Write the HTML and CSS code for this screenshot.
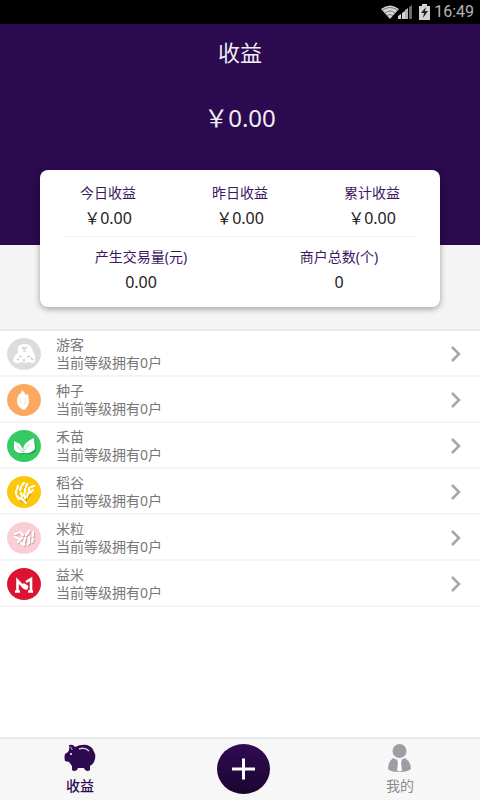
FILE: index.html
```html
<!DOCTYPE html>
<html lang="zh-CN">
<head>
<meta charset="utf-8">
<meta name="viewport" content="width=device-width, initial-scale=1">
<title>收益</title>
<link rel="stylesheet" href="styles.css">
</head>
<body>
<div class="status">
  <svg width="34" height="16" viewBox="0 0 34 16" aria-hidden="true">
    <path d="M0 5Q9-2 18 5L9 15Z" fill="#d4d4d4"/>
    <path d="M1 6.500Q9 0.500 17 6.500M4 9Q9 5 14 9M6 11.500Q9 9.500 12 11.500" fill="none" stroke="#777" stroke-width="1"/>
    <path d="M17 15v-3l3-2v5zM21 15V9l3-2v8z" fill="#d4d4d4"/>
    <path d="M24 15V6l3-2v11z" fill="#b5b5b5"/>
    <path d="M28 15V3l3-2v14z" fill="#6a6a6a"/>
  </svg>
  <svg width="11" height="16" viewBox="0 0 11 16" aria-hidden="true">
    <path d="M3 0h5v2h3v14H0V2h3z" fill="#d4d4d4"/>
    <path d="M7 3L2 9h3l-1 5 5-7H6z" fill="#222"/>
  </svg>
  <span class="clock">16:49</span>
</div>

<main class="page">
  <header class="hero">
    <h1 class="title">收益</h1>
    <p class="total">&#65509;0.00</p>
  </header>

  <section class="summary">
    <div class="card">
      <dl class="stats stats-three">
        <div><dt>今日收益</dt><dd>&#65509;0.00</dd></div>
        <div><dt>昨日收益</dt><dd>&#65509;0.00</dd></div>
        <div><dt>累计收益</dt><dd>&#65509;0.00</dd></div>
      </dl>
      <hr class="rule">
      <dl class="stats stats-two">
        <div><dt>产生交易量(元)</dt><dd>0.00</dd></div>
        <div><dt>商户总数(个)</dt><dd>0</dd></div>
      </dl>
    </div>
  </section>

  <ul class="levels">
    <li><a class="level" href="#visitor">
      <svg class="badge" viewBox="0 0 34 32" aria-hidden="true">
        <ellipse cx="17" cy="16" rx="17" ry="16" fill="#dcdcdc"/>
        <path d="M11 15Q9 7 16 6Q25 5 26 14Q29 17 28 24Q25 26 22 24L18 25 14 24Q9 27 6 23Q7 17 11 15Z" fill="#fff"/>
        <path d="M15 9l2 2 3-2M16 13h3M12 18l3 1M20 19l3-1M17 21v3M24 20l2 2M10 21l2 1" fill="none" stroke="#c2c2c2" stroke-width="1.200"/>
      </svg>
      <span class="info"><span>游客</span><span>当前等级拥有0户</span></span>
      <svg class="chevron" viewBox="0 0 12 16" aria-hidden="true"><path d="M2 1l7 7-7 7"/></svg>
    </a></li>
    <li><a class="level" href="#seed">
      <svg class="badge" viewBox="0 0 34 32" aria-hidden="true">
        <ellipse cx="17" cy="16" rx="17" ry="16" fill="#fda85f"/>
        <path d="M15 6L18 9V11L21 10L22 17Q22 22 17 26Q11 24 10 18Q10 11 14 9Z" fill="#fff"/>
        <path d="M14 14v6M18 14v7" stroke="#fee3cc" fill="none"/>
      </svg>
      <span class="info"><span>种子</span><span>当前等级拥有0户</span></span>
      <svg class="chevron" viewBox="0 0 12 16" aria-hidden="true"><path d="M2 1l7 7-7 7"/></svg>
    </a></li>
    <li><a class="level" href="#sprout">
      <svg class="badge" viewBox="0 0 34 32" aria-hidden="true">
        <ellipse cx="17" cy="16" rx="17" ry="16" fill="#34cb63"/>
        <path d="M8 12L14 15 17 20Q18 13 28 9L29 21Q25 25 18 24Q10 25 8 20Z" fill="#239f49"/>
        <path d="M7 11L13 14 16 19Q17 12 27 8L28 19Q24 24 17 23Q9 24 7 19Z" fill="#fff"/>
        <path d="M16 22L22 15M15 22L10 16M16 18v5" stroke="#9ce6b3" fill="none"/>
      </svg>
      <span class="info"><span>禾苗</span><span>当前等级拥有0户</span></span>
      <svg class="chevron" viewBox="0 0 12 16" aria-hidden="true"><path d="M2 1l7 7-7 7"/></svg>
    </a></li>
    <li><a class="level" href="#rice">
      <svg class="badge" viewBox="0 0 34 32" aria-hidden="true">
        <ellipse cx="17" cy="16" rx="17" ry="16" fill="#fdc70c"/>
        <path d="M15 23L20 28M11 21Q13 25 17 26M20 19L19 26M26 14L21 22" fill="none" stroke="#c79a08" stroke-width="1.500"/>
        <g fill="none" stroke="#fff" stroke-width="2.200" stroke-linecap="round">
          <path d="M11 10l-1 3M9 15v3M10 20l2 3M13 22l3 2M17 7l-2 2M14 11l-1 3M14 17l1 3M20 8l-1 3M18 13v3M17 18l1 4M27 10l-3 1M22 12v3M26 14l-3 3M21 17l-1 4M17 25l2 2"/>
        </g>
      </svg>
      <span class="info"><span>稻谷</span><span>当前等级拥有0户</span></span>
      <svg class="chevron" viewBox="0 0 12 16" aria-hidden="true"><path d="M2 1l7 7-7 7"/></svg>
    </a></li>
    <li><a class="level" href="#grain">
      <svg class="badge" viewBox="0 0 34 32" aria-hidden="true">
        <ellipse cx="17" cy="16" rx="17" ry="16" fill="#fbcdd6"/>
        <g fill="none" stroke-linecap="round" stroke-width="2.200">
          <path d="M9 13l3-1M14 11l3 3M20 14l3-4M27 11v4M9 16l4 2M12 21l4-4M19 17l-1 5M23 16v5M27 18l-1 3M15 22l3 2M22 23l1-1" stroke="#cba6ae"/>
          <path d="M8 12l3-1M13 10l3 3M19 13l3-4M26 10v4M8 15l4 2M11 20l4-4M18 16l-1 5M22 15v5M26 17l-1 3M14 21l3 2M21 22l1-1" stroke="#fff"/>
        </g>
      </svg>
      <span class="info"><span>米粒</span><span>当前等级拥有0户</span></span>
      <svg class="chevron" viewBox="0 0 12 16" aria-hidden="true"><path d="M2 1l7 7-7 7"/></svg>
    </a></li>
    <li><a class="level" href="#yimi">
      <svg class="badge" viewBox="0 0 34 32" aria-hidden="true">
        <ellipse cx="17" cy="16" rx="17" ry="16" fill="#dc1432"/>
        <path d="M10.500 23V12.500L17 19.500Q20 22 20 18.500L16 16M19 14L24 11V23M8 23.500h5M21 23.500h5" fill="none" stroke="#fff" stroke-width="2.600"/>
      </svg>
      <span class="info"><span>益米</span><span>当前等级拥有0户</span></span>
      <svg class="chevron" viewBox="0 0 12 16" aria-hidden="true"><path d="M2 1l7 7-7 7"/></svg>
    </a></li>
  </ul>
</main>

<nav class="tabs">
  <a class="tab tab-active" href="#income">
    <svg width="34" height="28" viewBox="0 0 34 28" aria-hidden="true">
      <path d="M6 1Q10 0 12 3Q18 0 24 1Q30 3 31 8Q33 10 32 15Q31 20 27 22V26Q25 28 22 26L21 24H15L14 26Q11 28 9 26V22L6 18L2 17Q1 13 2 10L5 8Q7 6 6 1Z" fill="#2c0b50"/>
      <path d="M16 5Q22 3 26 7" fill="none" stroke="#d8cde4" stroke-width="1.500"/>
      <path d="M7 3Q9 3 9 6" fill="none" stroke="#b5a5c8"/>
      <circle cx="8" cy="10" r="1" fill="#fff"/>
    </svg>
    <span>收益</span>
  </a>
  <button class="add" type="button" aria-label="添加">
    <svg width="60" height="52" viewBox="0 0 60 52" aria-hidden="true">
      <defs><linearGradient id="night" x1="0" y1="0" x2="0" y2="1"><stop offset="0" stop-color="#300b55"/><stop offset="1" stop-color="#1a062f"/></linearGradient></defs>
      <ellipse cx="33.500" cy="25" rx="26.500" ry="25" fill="url(#night)"/>
      <path d="M22 25h23M33.500 14.500v21" stroke="#fff" stroke-width="3" fill="none"/>
    </svg>
  </button>
  <a class="tab" href="#me">
    <svg width="26" height="28" viewBox="0 0 26 28" aria-hidden="true">
      <circle cx="12.500" cy="7" r="7" fill="#9b9fa5"/>
      <path d="M6 14Q12 18 18 14Q24 18 24 25Q21 28 12 28Q3 28 1 25Q1 18 6 14Z" fill="#9b9fa5"/>
      <path d="M10 15.500h5l-1 3 1 8-2.500 1-2.500-1 1-8z" fill="#fff"/>
    </svg>
    <span>我的</span>
  </a>
</nav>
</body>
</html>
```

FILE: styles.css
```css
* {
  box-sizing: border-box;
  margin: 0;
  padding: 0;
}

body {
  display: flex;
  flex-direction: column;
  min-height: 100vh;
  background: #fff;
  color: #222;
  font-family: "Noto Sans", "Noto Sans CJK SC", sans-serif;
  font-size: 14px;
  line-height: 18px;
}

a {
  color: inherit;
  text-decoration: none;
}

.status {
  display: flex;
  align-items: center;
  justify-content: flex-end;
  gap: 4px;
  height: 24px;
  padding-right: 6px;
  background: #000;
  color: #b5b5b5;
}

.clock {
  font-family: Roboto, sans-serif;
  font-size: 16px;
}

.page {
  flex: 1;
}

.hero {
  height: 221px;
  padding-top: 12px;
  background: #2b0a4f;
  color: #f1edf5;
  text-align: center;
}

.title {
  font-size: 22px;
  font-weight: 400;
  line-height: 32px;
}

.total {
  margin-top: 32px;
  font-size: 24px;
  line-height: 36px;
}

.summary {
  display: flow-root;
  padding: 0 40px 22px;
  background: #f4f4f4;
  border-bottom: 2px solid #e8e8e8;
}

.card {
  margin-top: -75px;
  padding: 11px 2px 12px;
  border-radius: 8px;
  background: #fff;
  box-shadow: 0 2px 6px rgba(0, 0, 0, 0.35);
}

.stats {
  display: grid;
  text-align: center;
}

.stats-three {
  grid-template-columns: repeat(3, 1fr);
}

.stats-two {
  grid-template-columns: repeat(2, 1fr);
}

.stats dt {
  color: #3a1763;
  line-height: 24px;
}

.stats dd {
  font-size: 16px;
  line-height: 26px;
}

.rule {
  height: 1px;
  margin: 5px 22px 8px;
  border: 0;
  background: #f2f2f2;
}

.levels {
  list-style: none;
}

.level {
  display: flex;
  align-items: center;
  height: 46px;
  padding: 2px 18px 0 7px;
  border-bottom: 2px solid #f4f4f4;
  color: #777;
}

.badge {
  width: 34px;
  height: 32px;
}

.info {
  display: flex;
  flex: 1;
  flex-direction: column;
  padding-left: 15px;
}

.chevron {
  width: 12px;
  height: 16px;
  fill: none;
  stroke: #a3a5a9;
  stroke-width: 2.5;
}

.tabs {
  display: grid;
  grid-template-columns: repeat(3, 1fr);
  align-items: center;
  justify-items: center;
  height: 63px;
  border-top: 2px solid #e9e9e9;
  background: #f7f7f7;
}

.tab {
  display: flex;
  flex-direction: column;
  align-items: center;
  gap: 5px;
  color: #8b8b8b;
}

.tab-active {
  color: #2c0b50;
  font-weight: 500;
}

.add {
  display: flex;
  border: 0;
  background: none;
}
```
